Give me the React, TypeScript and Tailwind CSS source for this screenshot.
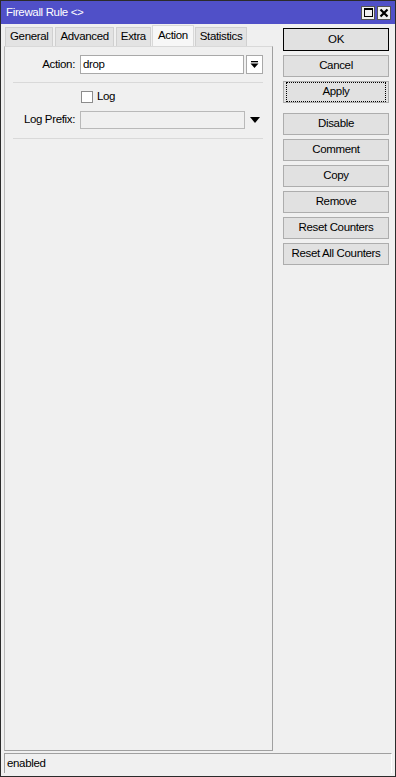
const font = { fontFamily: '"Liberation Sans", Arial, sans-serif' };

const tabs = ["General", "Advanced", "Extra", "Action", "Statistics"];

function SideButton({
  label,
  primary,
  focused,
  className = "",
}: {
  label: string;
  primary?: boolean;
  focused?: boolean;
  className?: string;
}) {
  return (
    <div
      className={`w-[106px] flex items-center justify-center bg-[#e1e1e1] text-black border ${
        primary ? "h-[23px] border-black" : "h-[22px] border-[#adadad]"
      } ${className}`}
    >
      <div
        className={`w-full h-full flex items-center justify-center ${
          focused ? "border border-dotted border-black m-[2px]" : ""
        }`}
      >
        {label}
      </div>
    </div>
  );
}

export default function App() {
  return (
    <div
      style={font}
      className="w-[396px] h-[777px] border border-[#2b2b2b] bg-[#f0f0f0] flex flex-col text-black text-[11.5px] tracking-[-0.35px] overflow-hidden"
    >
      {/* Title bar */}
      <div className="h-[23px] bg-[#5050c8] flex items-center justify-between pl-[5px] pr-[4px] shrink-0">
        <span className="text-white">Firewall Rule &lt;&gt;</span>
        <div className="flex gap-[2px]">
          <div className="w-[14px] h-[14px] bg-[#f0f0f0] border border-[#555] flex items-center justify-center">
            <div className="w-[9px] h-[9px] border border-black border-t-2" />
          </div>
          <div className="w-[14px] h-[14px] bg-[#f0f0f0] border border-[#555] flex items-center justify-center">
            <svg width="10" height="10" viewBox="0 0 10 10">
              <path d="M1.5 1.5 L8.5 8.5 M8.5 1.5 L1.5 8.5" stroke="black" strokeWidth="2.2" />
            </svg>
          </div>
        </div>
      </div>

      {/* Main */}
      <div className="flex-1 flex px-[3px] pt-[1px]">
        {/* Left: tabs + panel */}
        <div className="w-[269px] flex flex-col">
          <div className="flex items-end h-[21px] pl-[1px] gap-[2px]">
            {tabs.map((t) =>
              t === "Action" ? (
                <div
                  key={t}
                  className="h-[21px] px-[5px] bg-[#f7f7f7] border border-b-0 border-[#d9d9d9] flex items-center -mx-[1px] relative z-10"
                >
                  {t}
                </div>
              ) : (
                <div
                  key={t}
                  className="h-[19px] px-[4px] bg-[#e3e3e3] border border-b-0 border-[#d0d0d0] flex items-center"
                >
                  {t}
                </div>
              )
            )}
          </div>
          <div className="flex-1 border border-[#b9b9b9] border-t-[#d9d9d9] border-b-[#a0a0a0] border-r-[#a0a0a0] bg-[#f0f0f0] px-[8px] pt-[8px]">
            {/* Action row */}
            <div className="flex items-center h-[19px]">
              <div className="w-[62px] text-right">Action:</div>
              <div className="ml-[5px] w-[164px] h-[19px] bg-white border border-[#a9a9a9] flex items-center pl-[2px]">
                drop
              </div>
              <div className="ml-[2px] w-[17px] h-[19px] bg-white border border-[#a9a9a9] flex items-center justify-center">
                <svg width="9" height="9" viewBox="0 0 9 9">
                  <rect x="1" y="1" width="7" height="1.3" fill="black" />
                  <path d="M0.5 3.5 H8.5 L4.5 8 Z" fill="black" />
                </svg>
              </div>
            </div>
            <div className="mt-[8px] h-px bg-[#d9d9d9] w-[250px]" />
            {/* Log */}
            <div className="mt-[7px] flex items-center h-[13px] pl-[68px]">
              <div className="w-[12px] h-[12px] bg-white border border-[#8c8c8c]" />
              <span className="ml-[4px]">Log</span>
            </div>
            {/* Log prefix */}
            <div className="mt-[8px] flex items-center h-[18px]">
              <div className="w-[62px] text-right">Log Prefix:</div>
              <div className="ml-[5px] w-[165px] h-[18px] bg-[#f0f0f0] border border-[#b9b9b9]" />
              <svg className="ml-[5px]" width="10" height="6" viewBox="0 0 10 6">
                <path d="M0 0 H10 L5 6 Z" fill="black" />
              </svg>
            </div>
            <div className="mt-[9px] h-px bg-[#d9d9d9] w-[250px]" />
          </div>
        </div>

        {/* Right: buttons */}
        <div className="ml-[10px] pt-[3px] flex flex-col gap-[4px]">
          <SideButton label="OK" primary />
          <SideButton label="Cancel" />
          <SideButton label="Apply" focused />
          <SideButton label="Disable" className="mt-[6px]" />
          <SideButton label="Comment" />
          <SideButton label="Copy" />
          <SideButton label="Remove" />
          <SideButton label="Reset Counters" />
          <SideButton label="Reset All Counters" />
        </div>
      </div>

      {/* Status bar */}
      <div className="mx-[3px] mt-[2px] mb-[3px] h-[20px] border-t border-l border-[#a0a0a0] border-r border-r-[#ffffff] bg-[#f0f0f0] flex items-center pl-[2px] shrink-0">
        enabled
      </div>
    </div>
  );
}
